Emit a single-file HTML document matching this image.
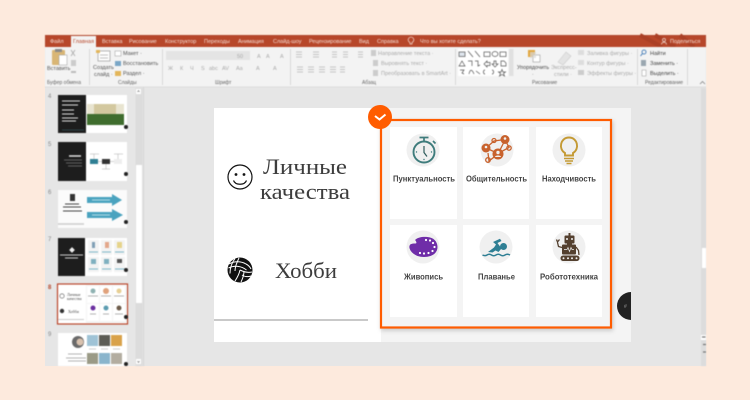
<!DOCTYPE html>
<html><head><meta charset="utf-8"><style>
html,body{margin:0;padding:0;width:750px;height:400px;overflow:hidden;background:#fdeadd}
svg{display:block;font-family:"Liberation Sans",sans-serif}
.t{font-size:5.5px;fill:#555}
.d{font-size:5.5px;fill:#aaa}
.w{font-size:5.5px;fill:#f6dfd6}
.l{font-size:5px;fill:#666}
.c{font-size:8.4px;font-weight:bold;fill:#444}
.s{font-family:"Liberation Serif",serif;font-size:22px;fill:#3d3d3d}
</style></head><body>
<svg width="750" height="400" viewBox="0 0 750 400" xmlns="http://www.w3.org/2000/svg">
<rect width="750" height="400" fill="#fdeadd"/>
<!-- window -->
<rect x="45" y="35" width="661" height="331" fill="#e6e6e6"/>
<g style="filter:blur(.4px)">
<rect x="45" y="35" width="661" height="12.500" fill="#b7472a"/>
<path d="M640 35l22 12M655 35l20 12M680 35l14 12" stroke="#ab4026" stroke-width="4" fill="none"/>
<rect x="45" y="47" width="661" height="39.500" fill="#f3f3f3"/>
<rect x="45" y="86.500" width="661" height="1" fill="#dcdcdc"/>
<rect x="71" y="36" width="25" height="12" fill="#f3f3f3"/>
<text class="w" x="50" y="43">Файл</text>
<text x="73" y="43" style="font-size:5.5px;fill:#b7472a">Главная</text>
<text class="w" x="102" y="43">Вставка</text>
<text class="w" x="129" y="43">Рисование</text>
<text class="w" x="165" y="43">Конструктор</text>
<text class="w" x="204" y="43">Переходы</text>
<text class="w" x="238" y="43">Анимация</text>
<text class="w" x="273" y="43">Слайд-шоу</text>
<text class="w" x="309" y="43">Рецензирование</text>
<text class="w" x="359" y="43">Вид</text>
<text class="w" x="377" y="43">Справка</text>
<path d="M411 44v-1.500a2.800 2.800 0 1 0-2 0V44z" transform="translate(1 0)" fill="none" stroke="#f6dfd6" stroke-width=".7"/>
<text class="w" x="420" y="43">Что вы хотите сделать?</text>
<text class="w" x="670" y="43">Поделиться</text>
<circle cx="664" cy="40" r="1.500" fill="none" stroke="#f6dfd6" stroke-width=".7"/><path d="M661.500 44.500c0-3 5-3 5 0" fill="none" stroke="#f6dfd6" stroke-width=".7"/>

<!-- separators -->
<g fill="#d8d8d8"><rect x="89" y="49" width="1" height="36"/><rect x="162" y="49" width="1" height="36"/><rect x="290" y="49" width="1" height="36"/><rect x="455" y="49" width="1" height="36"/><rect x="637" y="49" width="1" height="36"/><rect x="687" y="49" width="1" height="36"/></g>

<!-- clipboard -->
<rect x="52" y="50" width="13" height="15" rx="1" fill="#d9b675"/>
<rect x="55" y="49" width="7" height="3" fill="#8a8a8a"/>
<rect x="59" y="55" width="8" height="10" fill="#fff" stroke="#999" stroke-width=".5"/>
<path d="M71 50l4 6M75 50l-4 6" stroke="#aaa" stroke-width=".8"/>
<rect x="71" y="60" width="5" height="6" fill="#ccc"/>
<path d="M71 72l5 0" stroke="#bbb" stroke-width="2"/>
<text class="t" x="47" y="70">Вставить</text>
<text class="l" x="47" y="84">Буфер обмена</text>
<!-- slides -->
<rect x="98" y="51" width="12" height="10" fill="#fff" stroke="#999" stroke-width=".7"/>
<rect x="96" y="50" width="4" height="3" fill="#e3b65a"/>
<path d="M100 55h8M100 58h8" stroke="#aaa" stroke-width=".8"/>
<text class="t" x="93" y="69">Создать</text>
<text class="t" x="94" y="76">слайд ·</text>
<rect x="115" y="51" width="6" height="5" fill="#fff" stroke="#999" stroke-width=".5"/>
<rect x="115" y="61" width="6" height="5" fill="#7aa7c7"/>
<rect x="115" y="71" width="6" height="5" fill="#e3b65a"/>
<text class="t" x="123" y="55">Макет ·</text>
<text class="t" x="123" y="65">Восстановить</text>
<text class="t" x="123" y="75">Раздел ·</text>
<text class="l" x="118" y="84">Слайды</text>
<!-- font -->
<rect x="166" y="51" width="64" height="9" fill="#e4e4e4"/>
<rect x="230" y="51" width="20" height="9" fill="#e4e4e4"/>
<text class="d" x="237" y="58">50</text>
<text class="d" x="257" y="58">A</text><text class="d" x="266" y="58">A</text><text class="d" x="280" y="58">A</text>
<text class="d" x="168" y="70">Ж</text><text class="d" x="180" y="70">К</text><text class="d" x="190" y="70">Ч</text><text class="d" x="201" y="70">S</text><text class="d" x="209" y="70">abc</text><text class="d" x="222" y="70">AV</text><text class="d" x="236" y="70">Aa</text><text class="d" x="256" y="70">A</text><text class="d" x="273" y="70">A</text>
<text class="l" x="215" y="84">Шрифт</text>
<!-- paragraph -->
<g stroke="#c4c4c4" stroke-width=".9" fill="none">
<path d="M296 52h6M296 54.500h6M296 57h6M313 52h6M313 54.500h6M313 57h6M332 52h5M332 54.500h5M332 57h5M343 52h5M343 54.500h5M343 57h5M358 52h5M358 54.500h5M358 57h5"/>
<path d="M297 67h6M297 69.500h6M297 72h6M308 67h6M308 69.500h6M308 72h6M319 67h6M319 69.500h6M319 72h6M330 67h6M330 69.500h6M330 72h6M340 67h5M340 69.500h5M340 72h5"/>
</g>
<text class="d" x="378" y="55">Направление текста ·</text>
<text class="d" x="381" y="65">Выровнять текст ·</text>
<text class="d" x="381" y="75">Преобразовать в SmartArt ·</text>
<rect x="371" y="50" width="5" height="6" fill="#ccc"/><rect x="373" y="60" width="5" height="6" fill="#ccc"/><rect x="373" y="70" width="5" height="6" fill="#ccc"/>
<text class="l" x="362" y="84">Абзац</text>
<!-- shapes -->
<rect x="458" y="49" width="50" height="27" fill="#fff"/>
<rect x="509" y="49" width="4.500" height="27" fill="#e0e0e0"/>
<g fill="none" stroke="#555" stroke-width=".7">
<rect x="459" y="52" width="6" height="4.500" fill="#dfe6ee"/>
<path d="M468 51l5 6M475 51l5 6"/><rect x="484" y="52" width="6" height="4.500"/><ellipse cx="495" cy="54" rx="3" ry="2.500"/><rect x="500" y="52" width="6" height="4.500"/>
<path d="M459 66l3-5 3 5zM468 61h4v5M475 61h3v5l2-1M484 64l3-3v1.500h3v3h-3v1.500zM494 61h2v3h2l-3 3-3-3h2zM501 61h3l2 2v3h-5z"/>
<path d="M460 70h4l-2 3 2 1M469 74c1-5 3-5 5 0M476 71l4 3M485 70c-2 0-1 2-2 2 1 0 0 2 2 2M492 70c2 0 1 2 2 2-1 0 0 2-2 2"/>
<path d="M502 69.500l1 2.500 2.500 0-2 1.500 1 2.500-2.500-1.500-2.500 1.500 1-2.500-2-1.500 2.500 0z"/>
</g>
<!-- arrange -->
<rect x="528" y="50" width="7" height="7" fill="#e2a63d"/><rect x="533" y="55" width="7" height="7" fill="#fff" stroke="#999" stroke-width=".6"/><rect x="530" y="52" width="6" height="6" fill="#d8d8d8" opacity=".7"/>
<text x="517" y="69" textLength="32" lengthAdjust="spacingAndGlyphs" style="font-size:5.500px;fill:#444">Упорядочить</text>
<text class="l" x="532" y="76">·</text>
<path d="M558 62l8-10 5 4-8 9z" fill="#e4e4e4" stroke="#ccc" stroke-width=".6"/>
<text class="d" x="551" y="69">Экспресс-</text>
<text class="d" x="554" y="76">стили ·</text>
<rect x="578" y="50" width="6" height="5" fill="#ddd"/><rect x="578" y="60" width="6" height="5" fill="#ddd"/><rect x="578" y="70" width="6" height="5" fill="#ccc"/>
<text class="d" x="587" y="55">Заливка фигуры ·</text>
<text class="d" x="587" y="65">Контур фигуры ·</text>
<text class="d" x="587" y="75">Эффекты фигуры ·</text>
<text class="l" x="532" y="84">Рисование</text>
<!-- edit -->
<circle cx="644" cy="52" r="2" fill="none" stroke="#2b6cb0" stroke-width=".8"/><path d="M642.500 53.500l-2 2.500" stroke="#2b6cb0" stroke-width=".8"/>
<rect x="641" y="60" width="5" height="6" fill="#9aa7b0"/><rect x="642" y="70" width="4" height="6" fill="#fff" stroke="#999" stroke-width=".5"/>
<text x="650" y="55" style="font-size:5.500px;fill:#444">Найти</text>
<text x="650" y="65" style="font-size:5.500px;fill:#444">Заменить ·</text>
<text x="650" y="75" style="font-size:5.500px;fill:#444">Выделить ·</text>
<text class="l" x="645" y="84">Редактирование</text>
<path d="M700 84l2.500-2.500 2.500 2.500" stroke="#777" stroke-width=".7" fill="none"/>

<!-- left scrollbar -->
<rect x="135.500" y="88" width="7" height="278" fill="#dcdcdc"/>
<rect x="136" y="165" width="6" height="138" fill="#fff"/>
<rect x="136" y="89" width="5" height="5" fill="#fff"/><rect x="136" y="359" width="5" height="5" fill="#fff"/>
<path d="M137.500 92l1-1.500 1 1.500M137.500 361l1 1.500 1-1.500" stroke="#666" fill="none" stroke-width=".6"/>
<rect x="143" y="87" width="1" height="279" fill="#d6d6d6"/>
<!-- right scrollbar -->
<rect x="701" y="88" width="5" height="278" fill="#dcdcdc"/>
<rect x="702" y="248" width="4" height="20" fill="#fff"/>
<rect x="701" y="335" width="5" height="5" fill="#fff"/>
<path d="M702 337h3.500M703 344.500h3M703 352h3" stroke="#777" stroke-width="1.200"/>

<!-- thumbnail numbers -->
<g font-size="6" fill="#888"><text x="48" y="98">4</text><text x="48" y="146">5</text><text x="48" y="194">6</text><text x="48" y="241">7</text><text x="48" y="336">9</text></g>
<text x="48" y="289" font-size="6" fill="#b7472a" font-weight="bold">8</text>

<!-- thumb 4 -->
<rect x="58" y="95" width="69" height="38" fill="#fff"/>
<rect x="58" y="95" width="28" height="38" fill="#1d1d1d"/>
<path d="M62 101h18M62 105h16M62 110h12M62 114h12M62 118h16M62 121h14" stroke="#ddd" stroke-width="1"/>
<path d="M62 130h22" stroke="#3a6a70" stroke-width=".6"/>
<rect x="87" y="104" width="37" height="21" fill="#e8e4d0"/>
<rect x="94" y="104" width="22" height="11" fill="#d3c89f"/>
<rect x="87" y="114" width="37" height="11" fill="#3f6d2e"/>
<circle cx="126" cy="127" r="2" fill="#222"/>
<!-- thumb 5 -->
<rect x="58" y="142" width="69" height="39" fill="#fff"/>
<rect x="58" y="142" width="28" height="39" fill="#1d1d1d"/>
<path d="M69 156h12" stroke="#eee" stroke-width="1.400"/>
<path d="M64 160h18M66 163h16M68 166h14" stroke="#777" stroke-width=".8"/>
<rect x="90" y="159" width="8" height="5" fill="#2f7f94"/><rect x="102" y="159" width="8" height="5" fill="#333"/><rect x="114" y="159" width="8" height="5" fill="#eee"/>
<path d="M98 161.500h4M110 161.500h4M94 154v5M118 154v5M90 154h9M114 154h9M106 164v5M102 169h8" stroke="#aaa" stroke-width=".5"/>
<circle cx="126" cy="174" r="2" fill="#222"/>
<!-- thumb 6 -->
<rect x="58" y="190" width="69" height="38" fill="#fbfbfb"/>
<rect x="70" y="194" width="5" height="7" fill="#333"/>
<path d="M65 204h14M63 207h18M63 211h19" stroke="#444" stroke-width="1.100"/>
<path d="M58 224h26" stroke="#ccc" stroke-width="1.500"/>
<path d="M87 197h25v-3l10 6-10 6v-3h-25zM87 212h25v-3l11 6-11 6v-3h-25z" fill="#4aa3bf"/>
<path d="M92 200h18M92 215h18" stroke="#d5eef5" stroke-width=".8"/>
<circle cx="126" cy="222" r="2" fill="#222"/>
<!-- thumb 7 -->
<rect x="58" y="238" width="69" height="38" fill="#fff"/>
<rect x="58" y="238" width="27" height="38" fill="#1d1d1d"/>
<rect x="70" y="248" width="4" height="4" fill="#eee" transform="rotate(45 72 250)"/>
<path d="M60 255h23M65 258h13" stroke="#ccc" stroke-width="1"/>
<g fill="#f3f3f3"><rect x="88" y="240" width="11" height="15"/><rect x="101" y="240" width="11" height="15"/><rect x="114" y="240" width="11" height="15"/><rect x="88" y="257" width="11" height="15"/><rect x="101" y="257" width="11" height="15"/><rect x="114" y="257" width="11" height="15"/></g>
<rect x="92" y="242" width="3" height="6" fill="#7f9fb5"/><rect x="105" y="242" width="4" height="6" fill="#e3a78a"/><rect x="117" y="242" width="5" height="6" fill="#e6d38a"/>
<rect x="91" y="259" width="5" height="5" fill="#7fb0c0"/><rect x="104" y="259" width="5" height="5" fill="#7fb0c0"/><rect x="117" y="259" width="5" height="4" fill="#555"/>
<path d="M89 252h9M102 252h9M115 252h9M89 269h9M102 269h9M115 269h9" stroke="#7fb8c8" stroke-width="1"/>
<circle cx="126" cy="270" r="2" fill="#222"/>
<!-- thumb 8 -->
<rect x="57.500" y="284" width="70" height="40" fill="#fff" stroke="#b9472c" stroke-width="1.200"/>
<rect x="86" y="285" width="41" height="38" fill="#f4f4f4"/>
<g fill="#fff"><rect x="87" y="286" width="12" height="17"/><rect x="100" y="286" width="12" height="17"/><rect x="113" y="286" width="12" height="17"/><rect x="87" y="304" width="12" height="17"/><rect x="100" y="304" width="12" height="17"/><rect x="113" y="304" width="12" height="17"/></g>
<circle cx="93" cy="291" r="2.500" fill="#8fb2b2"/><circle cx="106" cy="291" r="3" fill="#e0a27c"/><circle cx="119" cy="291" r="2.500" fill="#e7cf94"/>
<circle cx="93" cy="308" r="2.500" fill="#6b2fa0"/><circle cx="106" cy="308" r="2.500" fill="#5c9cb0"/><circle cx="119" cy="308" r="2.500" fill="#6d5b4a"/>
<path d="M88 296h10M101 296h10M114 296h10M90 314h6M103 314h6M115 314h8" stroke="#999" stroke-width=".7"/>
<circle cx="62" cy="296" r="2.200" fill="none" stroke="#555" stroke-width=".6"/>
<circle cx="62" cy="311" r="2.200" fill="#333"/>
<text x="67" y="296" style="font-family:'Liberation Serif',serif;font-size:4px;fill:#444">Личные</text>
<text x="67" y="300" style="font-family:'Liberation Serif',serif;font-size:4px;fill:#444">качества</text>
<text x="68" y="313" style="font-family:'Liberation Serif',serif;font-size:4px;fill:#444">Хобби</text>
<path d="M58 319.500h26" stroke="#ccc" stroke-width="1"/>
<circle cx="126" cy="317" r="2" fill="#222"/>
<!-- thumb 9 -->
<rect x="58" y="333" width="69" height="33" fill="#fff"/>
<circle cx="78" cy="342" r="6" fill="#6a6a6a"/><circle cx="80" cy="342" r="3.500" fill="#d9c2ae"/>
<path d="M68 354h14M66 358h20M68 361h18" stroke="#999" stroke-width=".8"/>
<rect x="87" y="335" width="11" height="11" fill="#9fc3d6"/><rect x="99" y="335" width="11" height="11" fill="#5c5c55"/><rect x="111" y="335" width="11" height="11" fill="#d9a24a"/>
<rect x="87" y="353" width="11" height="11" fill="#9a9a86"/><rect x="99" y="353" width="11" height="11" fill="#8ab5cc"/><rect x="111" y="353" width="11" height="11" fill="#b3ada0"/>
<path d="M89 349h7M101 349h7M113 349h7" stroke="#bbb" stroke-width=".7"/>
<circle cx="126" cy="364" r="2" fill="#222"/>
</g>

<!-- main slide -->
<rect x="214" y="108" width="417" height="234" fill="#fff"/>
<rect x="381" y="108" width="250" height="234" fill="#f4f4f4"/>
<rect x="214" y="319" width="154" height="2" fill="#c9c9c9"/>

<g style="filter:blur(.3px)">
<!-- smiley -->
<g fill="none" stroke="#111" stroke-width="1.200">
<circle cx="240" cy="177" r="12"/>
<path d="M233.500 180.500c2 5 11 5 13 0"/>
</g>
<circle cx="236" cy="174.500" r="1.400" fill="#111"/><circle cx="244" cy="174.500" r="1.400" fill="#111"/>
<text class="s" x="263" y="174" textLength="84" lengthAdjust="spacingAndGlyphs">Личные</text>
<text class="s" x="260" y="199" textLength="90" lengthAdjust="spacingAndGlyphs">качества</text>
<text class="s" x="275" y="278" textLength="62" lengthAdjust="spacingAndGlyphs">Хобби</text>
<!-- ball -->
<circle cx="240" cy="270" r="12.500" fill="#111"/>
<g fill="none" stroke="#fff" stroke-width="1">
<path d="M229 264c5-3 12-3 17 0 2 1 4 3 5 5"/>
<path d="M228.500 268c6-3 13-2 18 2"/>
<path d="M235 258.500c-3 4-5 9-5 15M239 258c-2 4-4 9-4 13"/>
<path d="M240 270c-1 5-3 8-5 11M244 271c0 4-1 7-3 11"/>
<path d="M240 270c4 2 8 3 12 2M242 275c3 2 6 2 9 1"/>
</g>
</g>

<!-- frame -->
<rect x="381" y="120" width="230" height="207.500" fill="#f4f4f4" stroke="#ff5c00" stroke-width="2.200" style="filter:drop-shadow(1px 2px 2px rgba(0,0,0,.18))"/>
<g fill="#fff">
<rect x="390" y="127" width="67" height="92"/><rect x="463" y="127" width="66" height="92"/><rect x="536" y="127" width="66" height="92"/>
<rect x="390" y="225" width="67" height="92"/><rect x="463" y="225" width="66" height="92"/><rect x="536" y="225" width="66" height="92"/>
</g>
<g fill="#f0f0f0">
<circle cx="423" cy="150" r="16.500"/><circle cx="497" cy="150" r="16.500"/><circle cx="569" cy="150" r="16.500"/>
<circle cx="423" cy="247" r="16.500"/><circle cx="496" cy="247" r="16.500"/><circle cx="569" cy="247" r="16.500"/>
</g>
<g style="filter:blur(.3px)">
<!-- clock -->
<g fill="none" stroke="#3f7c7c" stroke-width="1.900">
<circle cx="424" cy="152" r="10.500"/>
<path d="M419.500 137.500h9M424 137.500v4M433 141l2.500 2.500" stroke-width="1.700"/>
<path d="M424 146v6.500l3 4" stroke-width="1.200" stroke="#2f5c5c"/>
</g>
<g fill="#3f7c7c"><circle cx="416.500" cy="152" r=".7"/><circle cx="431.500" cy="152" r=".7"/><circle cx="424" cy="159.500" r=".7"/></g>
<!-- network -->
<g fill="none" stroke="#c8622d" stroke-width="1.300">
<path d="M486 148l8-7 11-1.500 4 8-11 6-12-5.500zM488 153l1 8 9-7M505 140l-7 14"/>
<circle cx="494" cy="140.500" r="2"/><circle cx="509" cy="148" r="2.200"/><circle cx="488" cy="160" r="2.300"/>
</g>
<g fill="#c8622d">
<circle cx="486" cy="148" r="4.500"/><circle cx="505" cy="139.500" r="4.500"/><circle cx="498" cy="154" r="5.500"/>
</g>
<g fill="#f0f0f0"><circle cx="486" cy="147" r="1.300"/><circle cx="505" cy="138.500" r="1.300"/><circle cx="498" cy="152.500" r="1.700"/><path d="M495 157c0-2 6-2 6 0z"/></g>
<!-- bulb -->
<g fill="none" stroke="#c49a34">
<path d="M565 155.500v-2.500c-7-4-4.500-15.500 4-15.500s11 11.500 4 15.500v2.500z" stroke-width="1.900"/>
<path d="M564 158.500h10M565 161h8M566.500 163.500h5" stroke-width="1.500"/>
</g>
<!-- palette -->
<path d="M409.500 246c.5-2.500 3.500-2.500 6-2.500 1.500 0 1-2-.5-3.500 3-3 8-3.500 12.500-3 6 .5 10 4.500 10 10 0 6.500-6 10-13.500 10-6 0-11-2.500-13.500-6.500-.7-1.500-1.500-3-1-4.500z" fill="#6f2da8"/>
<g fill="#fff"><circle cx="426" cy="240" r="1.100"/><circle cx="430" cy="240.500" r="1.100"/><circle cx="433" cy="243" r="1.100"/><circle cx="434.500" cy="247" r="1.100"/><circle cx="432.500" cy="251" r="1.100"/><circle cx="428.500" cy="253" r="1.100"/><circle cx="424" cy="253.500" r="1.100"/><circle cx="420" cy="253" r="1.100"/></g>
<!-- swimmer -->
<g fill="#2f7f94">
<circle cx="503.500" cy="246.500" r="3.500"/>
<path d="M488 252l6-4.500 2-3-3-2.500 7-3.200 1.500 2.200-4 2 4 5.500-3 3.500-3-1.500-3 2z"/>
</g>
<path d="M482.500 255c2 1 3 1 4.500 0s3-1 4.500 0 3 1 4.500 0 3-1 4.500 0 3 1 4.500 0 3-1 5 0" fill="none" stroke="#2f7f94" stroke-width="1.500"/>
<!-- robot -->
<g fill="#54402f">
<rect x="568.500" y="233" width="2" height="3"/>
<rect x="564.500" y="235.500" width="10" height="8" rx="1"/>
<rect x="567" y="243" width="5" height="1.500"/>
<rect x="562" y="244.500" width="14" height="10" rx="1"/>
<rect x="560.500" y="255.500" width="19" height="5.500" rx="2.700"/>
</g>
<g fill="#f0f0f0"><circle cx="567" cy="239" r="1"/><circle cx="572" cy="239" r="1"/><circle cx="563.500" cy="258.200" r="1"/><circle cx="568" cy="258.200" r="1"/><circle cx="572" cy="258.200" r="1"/><circle cx="576.500" cy="258.200" r="1"/></g>
<path d="M564 249.500h3l1-2 1.500 4 1.500-4 1 2h2" fill="none" stroke="#f0f0f0" stroke-width=".7"/>
<path d="M562 247.500l-3.500-1-1-4M556.500 239.500l1 2.500 2-2.500M576 247l2.500 3.500.5 4.500" fill="none" stroke="#54402f" stroke-width="1.300"/>

<text class="c" x="393" y="181.500" textLength="62" lengthAdjust="spacingAndGlyphs">Пунктуальность</text>
<text class="c" x="466" y="181.500" textLength="61" lengthAdjust="spacingAndGlyphs">Общительность</text>
<text class="c" x="542" y="181.500" textLength="54" lengthAdjust="spacingAndGlyphs">Находчивость</text>
<text class="c" x="404" y="279.500" textLength="39" lengthAdjust="spacingAndGlyphs">Живопись</text>
<text class="c" x="478" y="279.500" textLength="37" lengthAdjust="spacingAndGlyphs">Плаванье</text>
<text class="c" x="540" y="279.500" textLength="58" lengthAdjust="spacingAndGlyphs">Робототехника</text>
</g>

<!-- check -->
<circle cx="380" cy="117" r="12" fill="#ff5c00"/>
<path d="M375 116l4.500 3.500 6-5" fill="none" stroke="#fff" stroke-width="2"/>

<!-- dark half circle -->
<path d="M631 292a14 14 0 0 0 0 28z" fill="#222"/>
<text x="624" y="308" font-size="5" fill="#999">#</text>
</svg>
</body></html>
